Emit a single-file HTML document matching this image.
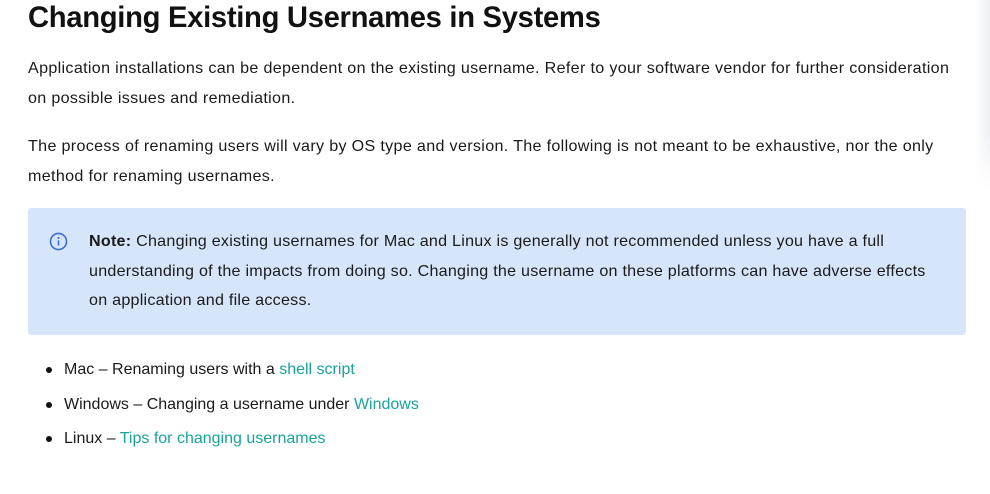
<!DOCTYPE html>
<html><head><meta charset="utf-8"><style>
body{margin:0;width:990px;height:494px;overflow:hidden;background:#fff;font-family:"Liberation Sans",sans-serif;color:#1a1a1a;position:relative}
.edge{position:absolute;right:0;top:0;width:16px;height:190px;background:linear-gradient(to right,rgba(240,242,246,0),#eef0f4);-webkit-mask:linear-gradient(to bottom,#000 70%,transparent)}
h1{position:absolute;left:28px;top:2px;margin:0;font-size:29.2px;font-weight:bold;letter-spacing:-0.3px;color:#111}
p{position:absolute;left:28px;margin:0;font-size:16.1px;line-height:30px;width:960px;white-space:nowrap;letter-spacing:0.33px}
.box{position:absolute;left:28px;top:208px;width:938px;height:127px;background:#d7e5fb;border-radius:3px}
.box .t{position:absolute;left:61px;top:19px;font-size:16.1px;line-height:29.5px;width:870px;white-space:nowrap;letter-spacing:0.25px}
.box svg{position:absolute;left:21px;top:24px}
ul{position:absolute;left:28px;top:355px;margin:0;padding:0;list-style:none;font-size:16px;letter-spacing:0}
li{height:34.5px;line-height:30px;padding-left:36px;position:relative}
li:before{content:"";position:absolute;left:18px;top:12px;width:6px;height:6px;border-radius:50%;background:#111}
a{color:#1aa39a;text-decoration:none}
</style></head><body>
<div class="edge"></div>
<h1>Changing Existing Usernames in Systems</h1>
<p style="top:53px">Application installations can be dependent on the existing username. Refer to your software vendor for further consideration<br>on possible issues and remediation.</p>
<p style="top:131px">The process of renaming users will vary by OS type and version. The following is not meant to be exhaustive, nor the only<br>method for renaming usernames.</p>
<div class="box">
<svg width="19" height="19" viewBox="0 0 18 18"><circle cx="9" cy="9" r="7.6" fill="none" stroke="#3b6fd0" stroke-width="1.5"/><circle cx="9" cy="5.6" r="1" fill="#3b6fd0"/><rect x="8.25" y="7.8" width="1.5" height="5" fill="#3b6fd0"/></svg>
<div class="t"><b>Note:</b> Changing existing usernames for Mac and Linux is generally not recommended unless you have a full<br>understanding of the impacts from doing so. Changing the username on these platforms can have adverse effects<br>on application and file access.</div>
</div>
<ul>
<li>Mac – Renaming users with a <a>shell script</a></li>
<li>Windows – Changing a username under <a>Windows</a></li>
<li>Linux – <a>Tips for changing usernames</a></li>
</ul>
</body></html>
